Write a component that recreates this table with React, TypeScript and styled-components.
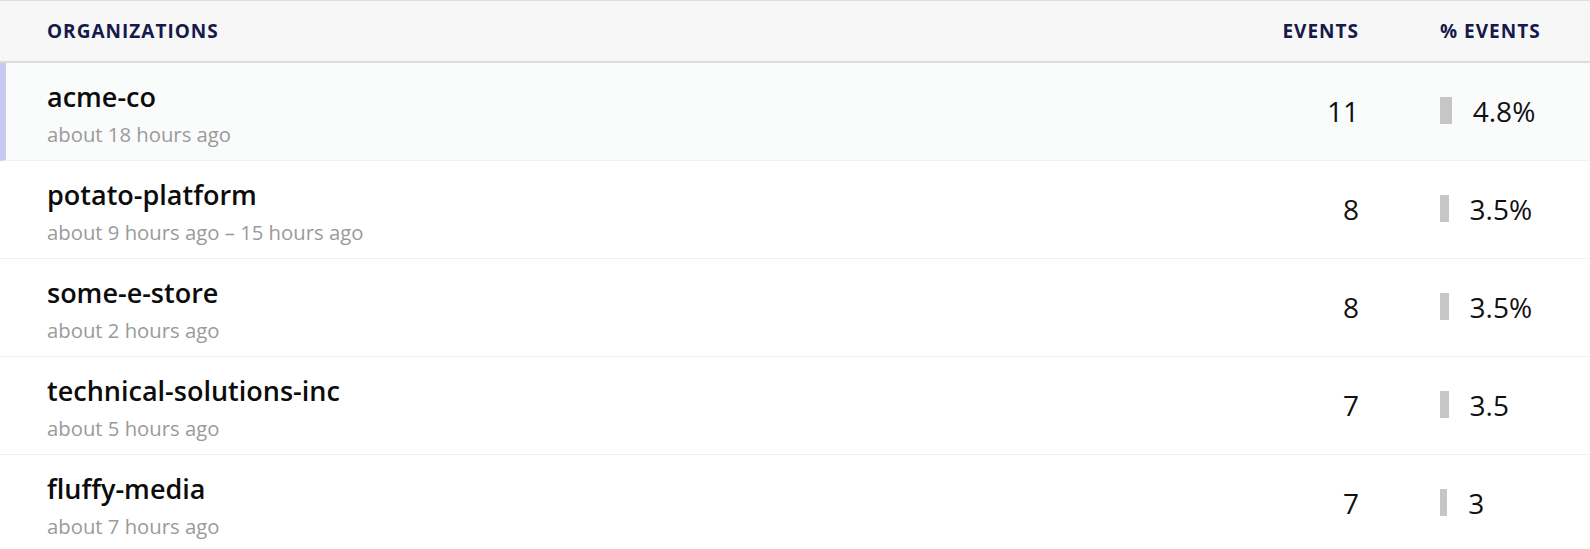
import React from 'react';
import styled, { createGlobalStyle } from 'styled-components';

const GlobalStyle = createGlobalStyle`
  html, body {
    margin: 0;
    padding: 0;
    background: #fff;
  }
  body {
    font-family: 'Open Sans', 'Noto Sans', Arial, sans-serif;
    color: #111;
  }
`;

type Org = {
  name: string;
  seen: string;
  events: number;
  percent: string;
  share: number;
};

const orgs: Org[] = [
  { name: 'acme-co', seen: 'about 18 hours ago', events: 11, percent: '4.8%', share: 4.8 },
  { name: 'potato-platform', seen: 'about 9 hours ago – 15 hours ago', events: 8, percent: '3.5%', share: 3.5 },
  { name: 'some-e-store', seen: 'about 2 hours ago', events: 8, percent: '3.5%', share: 3.5 },
  { name: 'technical-solutions-inc', seen: 'about 5 hours ago', events: 7, percent: '3.5', share: 3.5 },
  { name: 'fluffy-media', seen: 'about 7 hours ago', events: 7, percent: '3', share: 3 },
];

const Table = styled.div`
  width: 100%;
`;

const HeaderRow = styled.div`
  display: grid;
  grid-template-columns: 1fr auto 102px;
  column-gap: 81px;
  align-items: center;
  height: 60px;
  padding: 0 48px 0 47px;
  background: #f7f7f7;
  border-top: 1px solid #dedede;
  border-bottom: 2px solid #dcdcdc;
`;

const HeaderCell = styled.div<{ $align?: 'left' | 'right' }>`
  font-size: 19px;
  font-weight: 700;
  letter-spacing: 1px;
  text-transform: uppercase;
  white-space: nowrap;
  color: #16194a;
  text-align: ${(p) => p.$align ?? 'left'};
`;

const Row = styled.div<{ $active?: boolean }>`
  display: grid;
  grid-template-columns: 1fr auto 102px;
  column-gap: 81px;
  align-items: center;
  padding: 17px 48px 13px ${(p) => (p.$active ? '41px' : '47px')};
  border-left: ${(p) => (p.$active ? '6px solid #c8c8f2' : 'none')};
  background: ${(p) => (p.$active ? '#fafbfb' : '#fff')};
  border-bottom: 1px solid #f1f1f1;
`;

const NameCell = styled.div`
  display: flex;
  flex-direction: column;
  gap: 7px;
`;

const OrgName = styled.div`
  font-size: 27px;
  font-weight: 600;
  line-height: 34px;
  color: #0c0c0c;
`;

const Seen = styled.div`
  font-size: 20.3px;
  line-height: 26px;
  color: #9a9a9a;
`;

const Count = styled.div`
  font-size: 28px;
  text-align: right;
  color: #111;
  padding-bottom: 6px;
`;

const ShareCell = styled.div`
  display: flex;
  align-items: center;
  gap: 21px;
  padding-bottom: 6px;
`;

const ShareBar = styled.div`
  height: 27px;
  background: #c6c6c6;
`;

const ShareValue = styled.span`
  font-size: 28px;
  color: #111;
  white-space: nowrap;
`;

export default function App() {
  return (
    <>
      <GlobalStyle />
      <Table>
        <HeaderRow>
          <HeaderCell>Organizations</HeaderCell>
          <HeaderCell $align='right'>Events</HeaderCell>
          <HeaderCell>% Events</HeaderCell>
        </HeaderRow>
        {orgs.map((org, i) => (
          <Row key={org.name} $active={i === 0}>
            <NameCell>
              <OrgName>{org.name}</OrgName>
              <Seen>{org.seen}</Seen>
            </NameCell>
            <Count>{org.events}</Count>
            <ShareCell>
              <ShareBar style={{ width: `${org.share * 2.45}px` }} />
              <ShareValue>{org.percent}</ShareValue>
            </ShareCell>
          </Row>
        ))}
      </Table>
    </>
  );
}
